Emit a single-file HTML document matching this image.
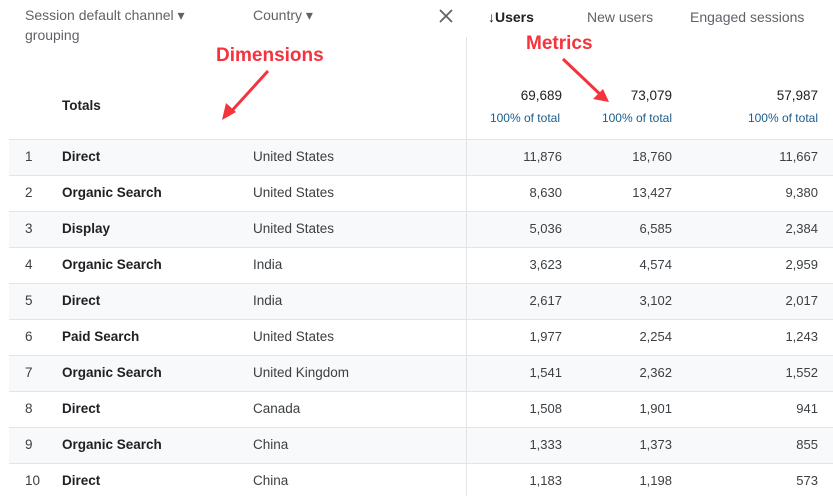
<!DOCTYPE html><html><head><style>
body{margin:0;width:833px;height:496px;background:#fff;font-family:"Liberation Sans",sans-serif;color:#202124;position:relative;overflow:hidden}
.a{position:absolute;white-space:nowrap}
.g{color:#5f6368;font-size:14px}
.row{position:absolute;left:9px;width:824px;height:35px;border-top:1px solid #e3e4e6}
.row.s{background:#f8f9fa}
.row span{position:absolute;top:9px;font-size:13.5px}
.n{left:16px;color:#3c4043}
.c{left:53px;font-weight:bold}
.k{left:244px;color:#3c4043}
.m{color:#3c4043;font-size:13px!important}
.m1{right:271px}.m2{right:161px}.m3{right:15px}
.red{color:#f4333c;font-weight:bold;font-size:19px;font-family:"Liberation Sans",sans-serif}
</style></head><body>
<div class="a g" style="left:25px;top:7px">Session default channel ▾</div>
<div class="a g" style="left:25px;top:27px">grouping</div>
<div class="a g" style="left:253px;top:7px">Country ▾</div>
<svg class="a" style="left:438px;top:8px" width="16" height="16"><path d="M2 2L14 14M14 2L2 14" stroke="#5f6368" stroke-width="1.8"/></svg>
<div class="a" style="left:488px;top:9px;font-size:14px;font-weight:bold;color:#202124">↓Users</div>
<div class="a g" style="left:587px;top:9px">New users</div>
<div class="a g" style="left:690px;top:9px">Engaged sessions</div>
<div class="a" style="left:466px;top:37px;width:1px;height:459px;background:#e3e4e6"></div>
<div class="a red" style="left:216px;top:45px">Dimensions</div>
<div class="a red" style="left:526px;top:33px">Metrics</div>
<svg class="a" style="left:0;top:0" width="833" height="140"><path d="M268 71L228 115" stroke="#f4333c" stroke-width="3"/><path d="M222 120L226 103L236 112Z" fill="#f4333c"/><path d="M563 59L603 97" stroke="#f4333c" stroke-width="3"/><path d="M609 102L593 99L603 89Z" fill="#f4333c"/></svg>
<div class="a" style="left:62px;top:98px;font-size:13.5px;font-weight:bold">Totals</div>
<div class="a" style="right:271px;top:88px;font-size:13.5px">69,689</div>
<div class="a" style="right:161px;top:88px;font-size:13.5px">73,079</div>
<div class="a" style="right:15px;top:88px;font-size:13.5px">57,987</div>
<div class="a" style="right:273px;top:111px;font-size:12px;color:#1a5d8a">100% of total</div>
<div class="a" style="right:161px;top:111px;font-size:12px;color:#1a5d8a">100% of total</div>
<div class="a" style="right:15px;top:111px;font-size:12px;color:#1a5d8a">100% of total</div>

<div class="row s" style="top:139px"><span class="n">1</span><span class="c">Direct</span><span class="k">United States</span><span class="m m1">11,876</span><span class="m m2">18,760</span><span class="m m3">11,667</span></div>
<div class="row" style="top:175px"><span class="n">2</span><span class="c">Organic Search</span><span class="k">United States</span><span class="m m1">8,630</span><span class="m m2">13,427</span><span class="m m3">9,380</span></div>
<div class="row s" style="top:211px"><span class="n">3</span><span class="c">Display</span><span class="k">United States</span><span class="m m1">5,036</span><span class="m m2">6,585</span><span class="m m3">2,384</span></div>
<div class="row" style="top:247px"><span class="n">4</span><span class="c">Organic Search</span><span class="k">India</span><span class="m m1">3,623</span><span class="m m2">4,574</span><span class="m m3">2,959</span></div>
<div class="row s" style="top:283px"><span class="n">5</span><span class="c">Direct</span><span class="k">India</span><span class="m m1">2,617</span><span class="m m2">3,102</span><span class="m m3">2,017</span></div>
<div class="row" style="top:319px"><span class="n">6</span><span class="c">Paid Search</span><span class="k">United States</span><span class="m m1">1,977</span><span class="m m2">2,254</span><span class="m m3">1,243</span></div>
<div class="row s" style="top:355px"><span class="n">7</span><span class="c">Organic Search</span><span class="k">United Kingdom</span><span class="m m1">1,541</span><span class="m m2">2,362</span><span class="m m3">1,552</span></div>
<div class="row" style="top:391px"><span class="n">8</span><span class="c">Direct</span><span class="k">Canada</span><span class="m m1">1,508</span><span class="m m2">1,901</span><span class="m m3">941</span></div>
<div class="row s" style="top:427px"><span class="n">9</span><span class="c">Organic Search</span><span class="k">China</span><span class="m m1">1,333</span><span class="m m2">1,373</span><span class="m m3">855</span></div>
<div class="row" style="top:463px"><span class="n">10</span><span class="c">Direct</span><span class="k">China</span><span class="m m1">1,183</span><span class="m m2">1,198</span><span class="m m3">573</span></div>
<div class="a" style="left:466px;top:37px;width:1px;height:459px;background:#e3e4e6"></div>
</body></html>
